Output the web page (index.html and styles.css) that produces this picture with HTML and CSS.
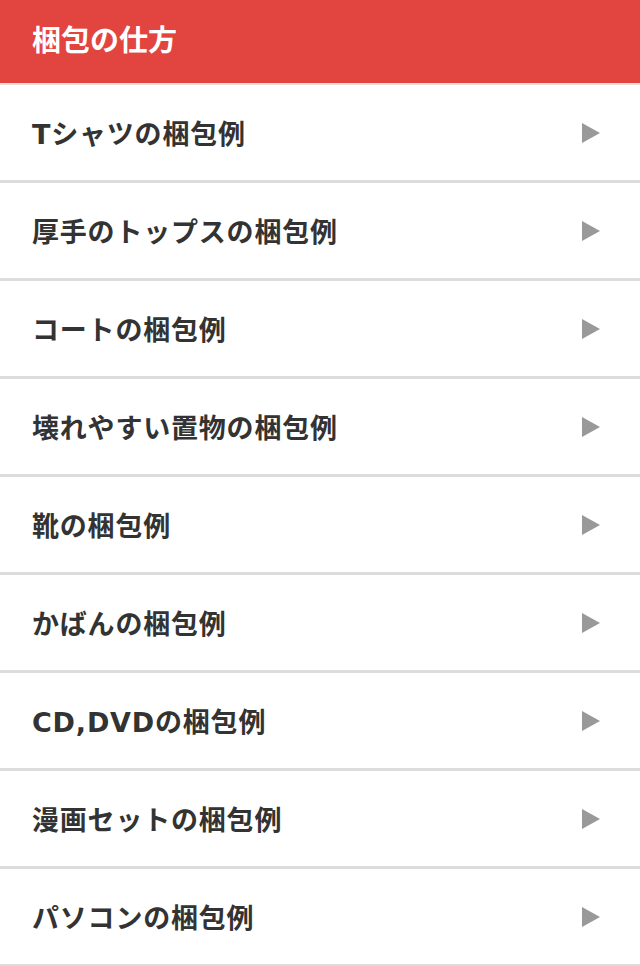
FILE: index.html
```html
<!DOCTYPE html>
<html lang="ja">
<head>
    <meta charset="UTF-8">
    <meta name="viewport" content="width=device-width, initial-scale=1.0">
    <title>梱包の仕方</title>
    <link rel="stylesheet" href="styles.css">
</head>
<body>
    <div class="header">
        <h1>梱包の仕方</h1>
    </div>

    <!-- Packing examples -->
    <ul class="menu">
        <li><a href="#"><span>Tシャツの梱包例</span><i class="arrow"></i></a></li>
        <li><a href="#"><span>厚手のトップスの梱包例</span><i class="arrow"></i></a></li>
        <li><a href="#"><span>コートの梱包例</span><i class="arrow"></i></a></li>
        <li><a href="#"><span>壊れやすい置物の梱包例</span><i class="arrow"></i></a></li>
        <li><a href="#"><span>靴の梱包例</span><i class="arrow"></i></a></li>
        <li><a href="#"><span>かばんの梱包例</span><i class="arrow"></i></a></li>
        <li><a href="#"><span>CD,DVDの梱包例</span><i class="arrow"></i></a></li>
        <li><a href="#"><span>漫画セットの梱包例</span><i class="arrow"></i></a></li>
        <li><a href="#"><span>パソコンの梱包例</span><i class="arrow"></i></a></li>
    </ul>
</body>
</html>
```

FILE: styles.css
```css
body {
    font-family: "DejaVu Sans", "Noto Sans CJK JP", sans-serif;
    background-color: #ffffff;
    color: #333333;
    margin: 0;
    padding: 0;
}
.header {
    background-color: #e2453f;
    height: 83px;
    border-bottom: 2px solid #e6e1d4;
    display: flex;
    align-items: center;
    padding: 0 32px;
}
.header h1 {
    margin: 0;
    color: #ffffff;
    font-size: 29px;
    font-weight: bold;
    line-height: 1;
}
.menu {
    list-style-type: none;
    margin: 0;
    padding: 0;
}
.menu li {
    border-bottom: 3px solid #dcdcdc;
}
.menu li a {
    display: flex;
    align-items: center;
    justify-content: space-between;
    height: 95px;
    padding: 0 40px 0 32px;
    color: #333333;
    text-decoration: none;
    font-size: 27px;
    font-weight: bold;
    letter-spacing: 0.8px;
}
.arrow {
    width: 0;
    height: 0;
    border-top: 10px solid transparent;
    border-bottom: 10px solid transparent;
    border-left: 18px solid #999999;
}
```
